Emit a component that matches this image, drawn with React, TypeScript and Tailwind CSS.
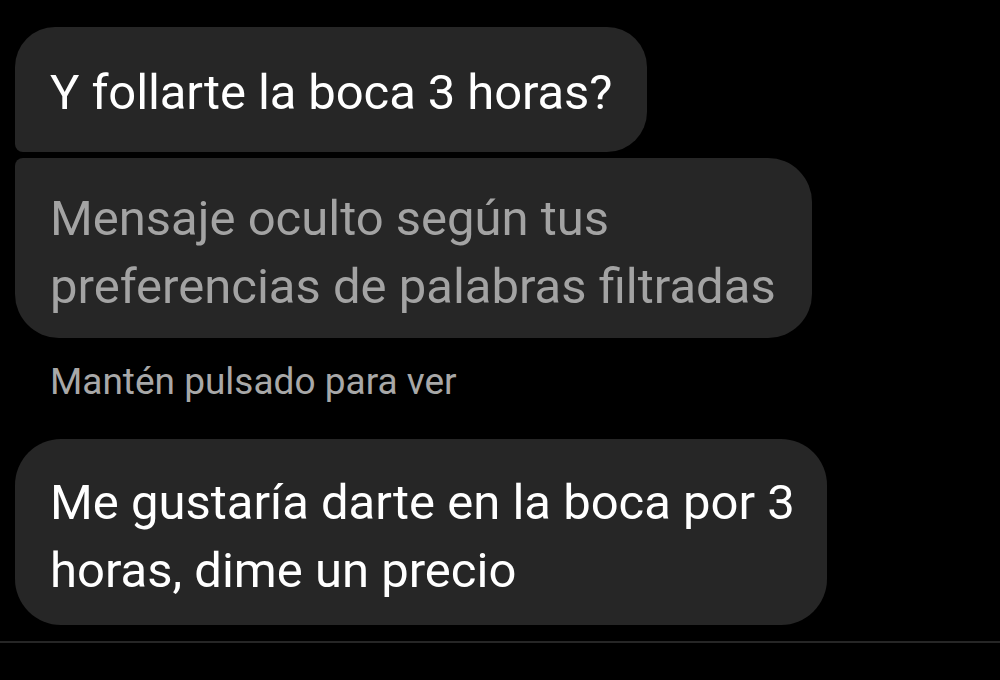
export default function App() {
  return (
    <div
      className="w-[1000px] h-[680px] bg-black overflow-hidden flex flex-col"
      style={{ fontFamily: "Roboto, 'Noto Sans', sans-serif" }}
    >
      <div className="flex flex-col items-start pl-[15px] pt-[27px]">
        <div className="bg-[#262626] text-white text-[49px] leading-[68px] tracking-[-0.1px] rounded-tl-[40px] rounded-tr-[40px] rounded-br-[40px] rounded-bl-[8px] pl-[35px] pr-[35px] pt-[32px] pb-[25px] whitespace-nowrap">
          Y follarte la boca 3 horas?
        </div>
        <div className="mt-[6px] bg-[#262626] text-[#a3a3a3] text-[49px] leading-[68px] rounded-tl-[8px] rounded-tr-[44px] rounded-br-[44px] rounded-bl-[44px] pl-[35px] pr-[36px] pt-[27px] pb-[17px] whitespace-nowrap">
          Mensaje oculto según tus
          <br />
          preferencias de palabras filtradas
        </div>
        <div className="pl-[35px] mt-[24px] text-[#a8a8a8] text-[37px] leading-[40px]">
          Mantén pulsado para ver
        </div>
        <div className="mt-[37px] bg-[#262626] text-white text-[49px] leading-[68px] rounded-[46px] pl-[35px] pr-[32px] pt-[30px] pb-[20px] whitespace-nowrap">
          Me gustaría darte en la boca por 3
          <br />
          horas, dime un precio
        </div>
      </div>
      <div className="mt-[16px] h-[2px] bg-[#262626]" />
    </div>
  );
}
